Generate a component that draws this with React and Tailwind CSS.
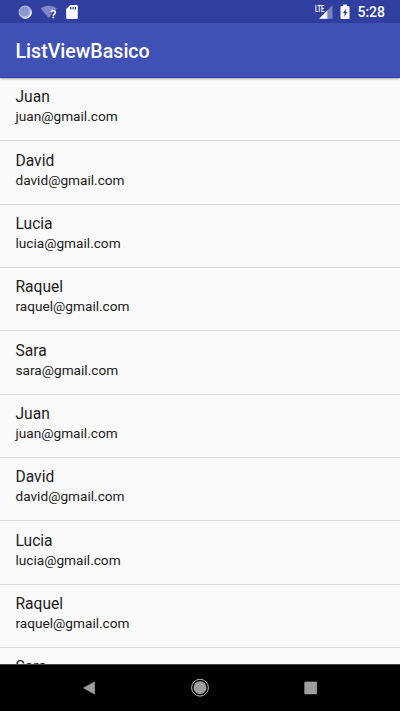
const contacts = [
  ['Juan', 'juan@gmail.com'],
  ['David', 'david@gmail.com'],
  ['Lucia', 'lucia@gmail.com'],
  ['Raquel', 'raquel@gmail.com'],
  ['Sara', 'sara@gmail.com'],
  ['Juan', 'juan@gmail.com'],
  ['David', 'david@gmail.com'],
  ['Lucia', 'lucia@gmail.com'],
  ['Raquel', 'raquel@gmail.com'],
  ['Sara', 'sara@gmail.com'],
];

function StatusBar() {
  return (
    <div className="flex h-[23px] shrink-0 items-center bg-[#303e9f] text-white">
      <svg className="ml-[18px] h-[14px] w-[14px]" viewBox="0 0 14 14">
        <circle cx="7.2" cy="7.2" r="6.6" fill="#b4badf" />
        <circle cx="6.6" cy="6.5" r="5.1" fill="#8e97cd" />
        <path d="M12.9 5.8a5.8 5.8 0 0 1-7.6 7" fill="none" stroke="#f2f3fb" strokeWidth="1.2" />
      </svg>
      <svg className="ml-2 h-[16px] w-[18px]" viewBox="0 0 18 16">
        <path d="M.7 4.4C5 .8 12.1.8 16.7 4.4L14.8 6.6c-2.8-1-4.5.5-4.6 2.8h1.9L8.7 14z" fill="#7f89c8" />
        <path d="M11.3 8.5c0-2.5 4-2.5 4 0 0 1.5-2 1.6-2 3.2" fill="none" stroke="#fff" strokeWidth="1.6" />
        <rect x="12.4" y="12.6" width="1.8" height="1.7" fill="#fff" />
      </svg>
      <svg className="ml-2 h-[16px] w-[12px]" viewBox="0 0 12 16">
        <path
          fillRule="evenodd"
          d="M4.4.9h6.1c.8 0 1.3.5 1.3 1.3v11.6c0 .8-.5 1.3-1.3 1.3H1.5c-.8 0-1.3-.5-1.3-1.3V5zM4.2 3v2.4h1.3V3zM6.5 3v2.4h1.3V3zM8.8 3v2.4h1.3V3z"
          fill="#fff"
        />
      </svg>
      <div className="ml-auto flex items-center">
        <div className="relative h-[16px] w-[18px]">
          <svg className="h-[16px] w-[18px]" viewBox="0 0 18 16">
            <path d="M17.5 1.3v13.4H4.2z" fill="#7782c6" />
            <path d="M12.3 6.5v8.2H4.2z" fill="#fff" />
          </svg>
          <span className="absolute top-[1px] left-0 origin-left scale-x-[.6] font-['Roboto',sans-serif] text-[9.5px] leading-[7px] font-bold">
            LTE
          </span>
        </div>
        <svg className="ml-[7px] h-[16px] w-[10px]" viewBox="0 0 10 16">
          <path
            fillRule="evenodd"
            d="M3.2.5h3.6v1.4h1.6c.7 0 1.1.4 1.1 1v11.2c0 .6-.4 1-1.1 1H1.6c-.7 0-1.1-.4-1.1-1V2.9c0-.6.4-1 1.1-1h1.6zM5.8 4.8 3 9.1h1.5v3.6L7.3 8.1H5.8z"
            fill="#fff"
          />
        </svg>
        <span className="mr-[15px] ml-[7px] pt-[1px] text-[14px] leading-4 font-medium">5:28</span>
      </div>
    </div>
  );
}

function NavigationBar() {
  return (
    <div className="grid h-[47px] shrink-0 grid-cols-[34px_111px_110px_111px_34px] items-center border-t border-[#444] bg-black">
      <span />
      <svg className="h-5 w-5 justify-self-center" viewBox="0 0 20 20">
        <path d="M3.5 9.9 14.5 4v12z" fill="#9d9d9d" stroke="#b5b5b5" strokeWidth=".5" />
      </svg>
      <svg className="h-5 w-5 justify-self-center" viewBox="0 0 20 20">
        <circle cx="10" cy="9.7" r="8.4" fill="none" stroke="#b7b7b7" strokeWidth="1" />
        <circle cx="10" cy="9.7" r="6.2" fill="#9d9d9d" stroke="#b7b7b7" strokeWidth=".5" />
      </svg>
      <svg className="h-5 w-5 justify-self-center" viewBox="0 0 20 20">
        <rect x="3.7" y="3.9" width="12" height="12" rx=".5" fill="#9d9d9d" stroke="#b5b5b5" strokeWidth=".5" />
      </svg>
      <span />
    </div>
  );
}

export default function App() {
  return (
    <div className="flex h-[711px] w-[400px] flex-col overflow-hidden bg-[#fafafa] font-['Roboto',sans-serif]">
      <StatusBar />
      <header className="z-10 flex h-[55px] shrink-0 items-center border-b border-[#303fb4] bg-[#3f51b5] pt-[3px] pl-[15.5px] shadow-[0_1px_2px_rgba(0,0,0,0.35)]">
        <h1 className="text-[19.6px] leading-6 font-medium text-white">ListViewBasico</h1>
      </header>
      <ul className="min-h-0 flex-1 overflow-hidden">
        {contacts.map(([name, email], i) => (
          <li key={i} className="h-[63.33px] border-b border-[#d9d9d9] pt-[9.4px] pl-[15.5px]">
            <p className="text-[15.6px] leading-5 text-[#1c1c1c]">{name}</p>
            <p className="text-[13.65px] leading-[18.6px] text-[#1c1c1c]">{email}</p>
          </li>
        ))}
      </ul>
      <NavigationBar />
    </div>
  );
}
